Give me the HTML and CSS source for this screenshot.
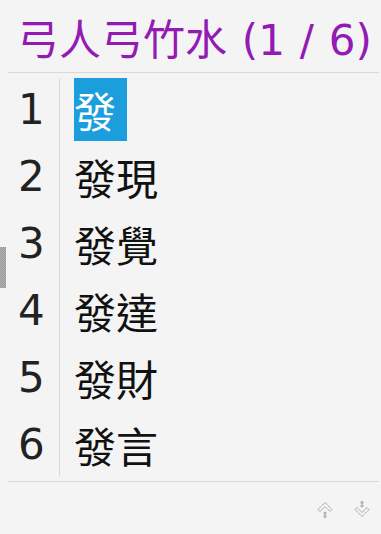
FILE: index.html
```html
<!DOCTYPE html>
<html>
<head>
    <meta charset="utf-8">
    <title>候選字</title>
    <link rel="stylesheet" href="styles.css">
</head>
<body>
    <div class="grip"></div>
    <div class="panel">
        <div class="preedit"><span class="code">弓人弓竹水</span> (1 / 6)</div>
        <div class="list">
            <div class="labels">
                <div class="cell">1</div>
                <div class="cell">2</div>
                <div class="cell">3</div>
                <div class="cell">4</div>
                <div class="cell">5</div>
                <div class="cell">6</div>
            </div>
            <div class="words">
                <div class="cell"><span class="word current">發</span></div>
                <div class="cell"><span class="word">發現</span></div>
                <div class="cell"><span class="word">發覺</span></div>
                <div class="cell"><span class="word">發達</span></div>
                <div class="cell"><span class="word">發財</span></div>
                <div class="cell"><span class="word">發言</span></div>
            </div>
        </div>
        <div class="pager">
            <button class="page-btn" title="上一頁">
                <svg width="16" height="17" viewBox="0 0 16 17">
                    <path d="M1 8.5 L8 1.5 L15 8.5 L13 10.5 L8 5.5 L3 10.5 Z" fill="none" stroke="#8e8e8e" stroke-width="1" stroke-dasharray="1.4 0.7"/>
                    <circle cx="8" cy="12.2" r="1.1" fill="none" stroke="#8e8e8e" stroke-width="0.9"/>
                    <circle cx="8" cy="15.5" r="1.1" fill="none" stroke="#8e8e8e" stroke-width="0.9"/>
                </svg>
            </button>
            <button class="page-btn" title="下一頁">
                <svg width="16" height="17" viewBox="0 0 16 17">
                    <circle cx="8" cy="1.5" r="1.1" fill="none" stroke="#8e8e8e" stroke-width="0.9"/>
                    <circle cx="8" cy="4.8" r="1.1" fill="none" stroke="#8e8e8e" stroke-width="0.9"/>
                    <path d="M1 8.5 L3 6.5 L8 11.5 L13 6.5 L15 8.5 L8 15.5 Z" fill="none" stroke="#8e8e8e" stroke-width="1" stroke-dasharray="1.4 0.7"/>
                </svg>
            </button>
        </div>
    </div>
</body>
</html>
```

FILE: styles.css
```css
body {
    margin: 0;
    width: 381px;
    height: 534px;
    background-color: #f4f4f4;
    position: relative;
    overflow: hidden;
}

.panel {
    padding: 0 2px 0 8px;
}

.preedit {
    height: 72px;
    padding-left: 9px;
    font-family: "DejaVu Sans", "Noto Sans CJK TC", sans-serif;
    font-size: 42px;
    line-height: 74px;
    word-spacing: 1.5px;
    color: #931ab4;
    border-bottom: 1px solid #d9d9d9;
    white-space: nowrap;
}

.code {
    font-family: "Noto Sans CJK TC", sans-serif;
}

.list {
    display: flex;
    margin-top: 5px;
}

.labels {
    width: 41px;
    padding-left: 10px;
    border-right: 1px solid #d9d9d9;
    font-family: "DejaVu Sans", sans-serif;
    font-size: 42px;
    color: #222222;
}

.words {
    flex: 1;
    padding-left: 14px;
    font-family: "Noto Sans CJK TC", "Noto Sans CJK SC", sans-serif;
    font-size: 42px;
    color: #111111;
}

.labels,
.words {
    display: flex;
    flex-direction: column;
    gap: 4px;
}

.cell {
    height: 63px;
    line-height: 63px;
}

.word {
    display: inline-block;
    height: 63px;
}

.word.current {
    background-color: #1d9edc;
    color: #ffffff;
    padding-right: 11px;
}

.pager {
    margin-top: 5px;
    border-top: 1px solid #d9d9d9;
    display: flex;
    justify-content: flex-end;
    gap: 21px;
    padding: 19px 9px 0 0;
}

.page-btn {
    padding: 0;
    border: none;
    background: none;
    width: 16px;
    height: 17px;
}

.grip {
    position: absolute;
    left: 0;
    top: 247px;
    width: 6px;
    height: 41px;
    background-color: #b4b4b4;
    background-image: linear-gradient(45deg, #979797 25%, transparent 25%, transparent 75%, #979797 75%),
        linear-gradient(45deg, #979797 25%, transparent 25%, transparent 75%, #979797 75%);
    background-size: 2px 2px;
    background-position: 0 0, 1px 1px;
}
```
